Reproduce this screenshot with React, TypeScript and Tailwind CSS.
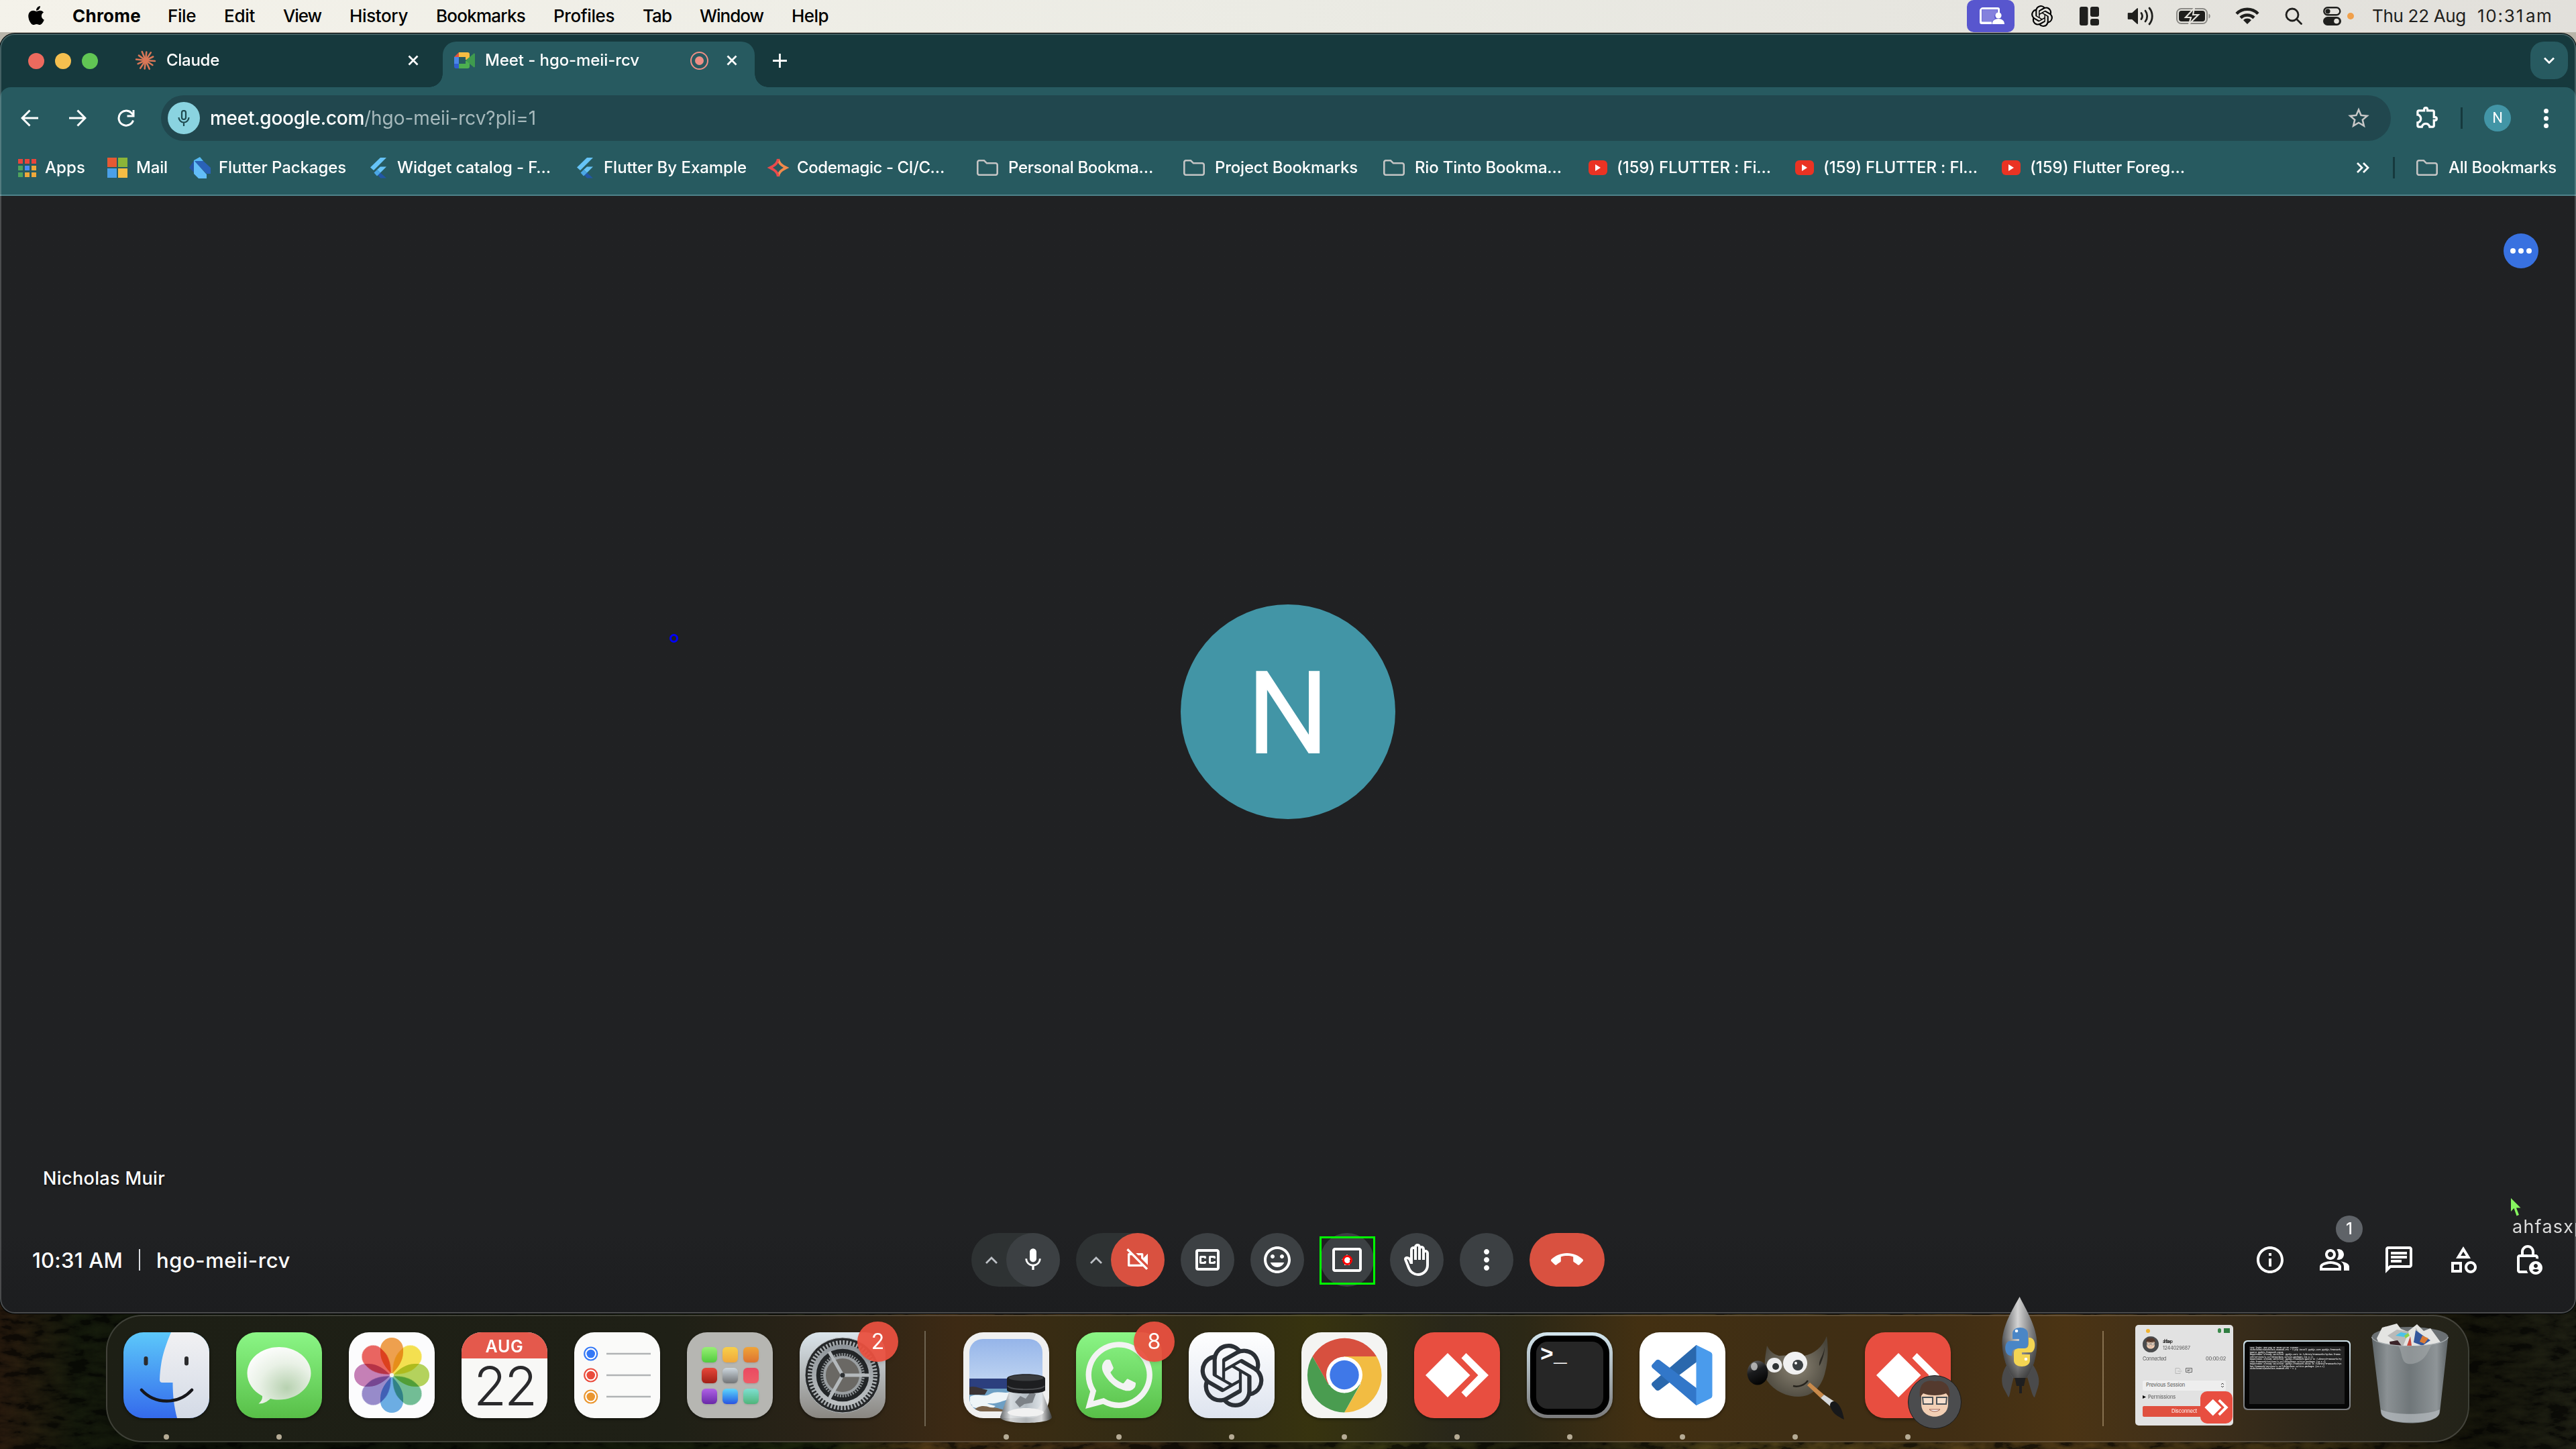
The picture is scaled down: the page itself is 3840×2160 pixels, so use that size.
import { useLayoutEffect, useRef } from "react";
import type { ReactNode } from "react";
import { SiOpenai } from "react-icons/si";
import { FaApple, FaWhatsapp } from "react-icons/fa";
import {
  MdMic,
  MdOutlineVideocamOff,
  MdOutlineClosedCaption,
  MdOutlineMood,
  MdOutlinePresentToAll,
  MdOutlineBackHand,
  MdMoreVert,
  MdCallEnd,
  MdInfoOutline,
  MdOutlinePeopleAlt,
  MdOutlineChat,
  MdOutlineCategory,
  MdOutlineLockPerson,
  MdStarBorder,
  MdOutlineExtension,
} from "react-icons/md";

/** One line of text whose tracking is adjusted so that it spans exactly `w` pixels. */
function Fit({ w, children, className = "" }: { w: number; children: string; className?: string }) {
  const ref = useRef<HTMLSpanElement>(null);
  useLayoutEffect(() => {
    const el = ref.current;
    if (!el) return;
    el.style.letterSpacing = "0px";
    const natural = el.getBoundingClientRect().width;
    el.style.letterSpacing = `${(w - natural) / children.length}px`;
  }, [w, children]);
  return (
    <span ref={ref} className={`inline-block shrink-0 whitespace-pre ${className}`}>
      {children}
    </span>
  );
}

/* ------------------------------------------------------------------ */
/* macOS menu bar                                                      */
/* ------------------------------------------------------------------ */

const menus: [string, number][] = [
  ["File", 42],
  ["Edit", 46],
  ["View", 57],
  ["History", 87],
  ["Bookmarks", 133],
  ["Profiles", 91],
  ["Tab", 43],
  ["Window", 95],
  ["Help", 55],
];

function MenuBar() {
  return (
    <div className="flex h-12 shrink-0 items-center bg-linear-to-r from-[#f4f2ea] via-[#ebebe4] to-[#e2e0db] text-[26px] leading-none text-black">
      <FaApple className="ml-[38px] h-[32px] w-[32px] -translate-y-px" />
      <Fit w={102} className="ml-[38px] font-bold">
        Chrome
      </Fit>
      <div className="ml-10 flex gap-[42px] font-[450]">
        {menus.map(([label, w]) => (
          <Fit key={label} w={w}>
            {label}
          </Fit>
        ))}
      </div>
      <div className="ml-auto flex h-full items-center text-[#1f1f1d]">
        <div className="flex h-12 w-[71px] items-center justify-center rounded-[10px] bg-[#5856ce]">
          <svg className="h-8 w-10" viewBox="0 0 40 32" fill="none">
            <path d="M8 3h22a3 3 0 0 1 3 3v6h-3V6H6v18h15v4H6a3 3 0 0 1-3-3V8a5 5 0 0 1 5-5z" fill="#fff" />
            <path d="M6.500 6.500H29V11a6 6 0 0 0-3 9l-5 4.500H6.500z" fill="#8481dd" />
            <circle cx="31" cy="15" r="4.600" fill="#fff" />
            <path d="M21.500 28c0-5 4-8 9.500-8s9 3 9 8z" fill="#fff" />
          </svg>
        </div>
        <SiOpenai className="ml-[25px] h-8 w-8 text-black" />
        <svg className="ml-10 h-7 w-[29px]" viewBox="0 0 29 28" fill="currentColor">
          <rect width="12.500" height="28" rx="3" />
          <rect x="16" width="13" height="15" rx="3" />
          <rect x="16" y="18" width="13" height="10" rx="3" />
        </svg>
        <svg className="ml-[42px] h-7 w-[40px]" viewBox="0 0 40 28" fill="none" stroke="currentColor" strokeWidth="2.800" strokeLinecap="round">
          <path d="M1 9.500h6L16 2v24l-9-7.500H1z" fill="currentColor" stroke="none" />
          <path d="M1.500 10h6L15 3v22l-7.500-7h-6z" strokeLinejoin="round" strokeWidth="1.500" />
          <path d="M21 9.500a8 8 0 0 1 0 9M27 6a13 13 0 0 1 0 16M33 2a19 19 0 0 1 0 24" />
        </svg>
        <svg className="ml-[33px] h-6 w-[52px]" viewBox="0 0 52 24" fill="none">
          <rect x="1" y="1" width="45" height="22" rx="6.500" stroke="#8a8985" strokeWidth="2" />
          <rect x="4" y="4" width="39" height="16" rx="4" fill="#1f1f1d" />
          <path d="M48.500 8.500c3 1 3 6 0 7z" fill="#8a8985" />
          <path d="M27 0 14 14h8l-3 10 14-14h-8z" fill="#1f1f1d" stroke="#e4e2dc" strokeWidth="2.200" />
        </svg>
        <svg className="ml-[36px] h-[26px] w-[36px]" viewBox="0 0 36 26" fill="none" stroke="currentColor" strokeWidth="4.600">
          <path d="M2 9.500a22.500 22.500 0 0 1 32 0M8 15.500a14.500 14.500 0 0 1 20 0" />
          <path d="m18 25-6-6a8.500 8.500 0 0 1 12 0z" fill="currentColor" stroke="none" />
        </svg>
        <svg className="ml-[38px] h-[26px] w-[27px]" viewBox="0 0 27 26" fill="none" stroke="currentColor" strokeWidth="2.800" strokeLinecap="round">
          <circle cx="11" cy="11" r="9" />
          <path d="m17.500 17.500 7 7" />
        </svg>
        <svg className="ml-[30px] h-7 w-[27px]" viewBox="0 0 27 28">
          <rect x="1.300" y="1.300" width="24" height="11" rx="5.500" fill="none" stroke="currentColor" strokeWidth="2.400" />
          <circle cx="7" cy="6.800" r="3.600" fill="currentColor" />
          <rect y="15" width="27" height="13" rx="6.500" fill="currentColor" />
          <circle cx="20" cy="21.500" r="3.800" fill="#e4e2dc" />
        </svg>
        <div className="ml-[9px] h-2.5 w-2.5 rounded-full bg-[#f0a04b]" />
        <Fit w={140} className="ml-[27px]">
          Thu 22 Aug
        </Fit>
        <Fit w={70} className="ml-[17px]">
          10:31
        </Fit>
        <Fit w={40} className="mr-[35px] ml-[2px]">
          am
        </Fit>
      </div>
    </div>
  );
}

/* ------------------------------------------------------------------ */
/* Browser chrome                                                      */
/* ------------------------------------------------------------------ */

function Cross({ className = "" }: { className?: string }) {
  return (
    <svg className={`h-4 w-4 shrink-0 ${className}`} viewBox="0 0 16 16" stroke="#fff" strokeWidth="2.800">
      <path d="m1.500 1.500 13 13m0-13-13 13" />
    </svg>
  );
}

const rays = [0, 28, 58, 88, 118, 150, 180, 208, 240, 270, 300, 332];

function TabStrip() {
  return (
    <div className="flex h-20 shrink-0 items-end bg-[#16393d]">
      <div className="flex h-[68px] items-center">
        <div className="-mt-2.5 ml-[42px] flex gap-4">
          <div className="h-6 w-6 rounded-full bg-[#ed6a5e]" />
          <div className="h-6 w-6 rounded-full bg-[#f4bf4f]" />
          <div className="h-6 w-6 rounded-full bg-[#61c554]" />
        </div>
        <svg className="-mt-3 ml-[55px] h-8 w-8" viewBox="-16 -16 32 32" stroke="#d97757" strokeWidth="2.600" strokeLinecap="round">
          {rays.map((a, i) => (
            <path key={a} d={i % 2 ? "M0 0V-14" : "M0 0V-12.500"} transform={`rotate(${a + 6})`} />
          ))}
        </svg>
        <Fit w={79} className="-mt-3 ml-[15px] text-[24px] leading-none font-medium text-white">
          Claude
        </Fit>
        <Cross className="-mt-3 ml-[281px]" />
      </div>
      <div className="relative ml-[36px] flex h-[68px] w-[465px] items-center rounded-t-[20px] bg-[#275a60]">
        <div className="absolute bottom-0 -left-5 h-5 w-5 bg-[radial-gradient(circle_at_0_0,#16393d_19.500px,#275a60_20px)]" />
        <div className="absolute -right-5 bottom-0 h-5 w-5 bg-[radial-gradient(circle_at_100%_0,#16393d_19.500px,#275a60_20px)]" />
        <svg className="-mt-3 ml-[17px] h-6 w-[31px]" viewBox="0 0 31 24">
          <path d="M0 7h7v10H0z" fill="#4a86e8" />
          <path d="M7 0v7H0z" fill="#e2533f" />
          <path d="M7 0h13a3 3 0 0 1 3 3v9l-6-1V7H7z" fill="#f5bc42" />
          <path d="M0 17h7v7H3a3 3 0 0 1-3-3z" fill="#2f5fd0" />
          <path d="M7 17h10v-4l6-1v9a3 3 0 0 1-3 3H7z" fill="#4caf50" />
          <path d="m17 12 12-10c1-1 2 0 2 1v18c0 1-1 2-2 1z" fill="#3f9a4e" />
        </svg>
        <Fit w={230} className="-mt-3 ml-[15px] text-[24px] leading-none font-medium text-white">
          Meet - hgo-meii-rcv
        </Fit>
        <div className="-mt-3 ml-[76px] flex h-[27px] w-[27px] items-center justify-center rounded-full border-[2.5px] border-[#ee8f86]">
          <div className="h-[13px] w-[13px] rounded-full bg-[#ee8f86]" />
        </div>
        <Cross className="-mt-3 ml-[27px]" />
      </div>
      <div className="flex h-[68px] items-center">
        <svg className="-mt-3 ml-[27px] h-[21px] w-[21px]" viewBox="0 0 21 21" stroke="#fff" strokeWidth="2.800">
          <path d="M10.500 0v21M0 10.500h21" />
        </svg>
      </div>
      <div className="mr-3 mb-3 ml-auto flex h-14 w-14 items-center justify-center rounded-[20px] bg-[#275a60]">
        <svg className="h-[10px] w-4" viewBox="0 0 16 10" fill="none" stroke="#fff" strokeWidth="2.800">
          <path d="m1 1.500 7 7 7-7" />
        </svg>
      </div>
    </div>
  );
}

function Toolbar() {
  return (
    <div className="flex h-[80px] shrink-0 items-center pt-3 text-white">
      <svg className="ml-[31px] h-[26px] w-[26px]" viewBox="0 0 26 26" fill="none" stroke="#fff" strokeWidth="3">
        <path d="M26 13H2.500M13.500 1.500 2 13l11.500 11.500" />
      </svg>
      <svg className="ml-[46px] h-[26px] w-[26px]" viewBox="0 0 26 26" fill="none" stroke="#fff" strokeWidth="3">
        <path d="M0 13h23.500M12.500 1.500 24 13 12.500 24.500" />
      </svg>
      <svg className="ml-[46px] h-[26px] w-[26px]" viewBox="0 0 26 26" fill="none" stroke="#fff" strokeWidth="3">
        <path d="M23.500 16.500A11 11 0 1 1 20.500 5l3.500 3.500" />
        <path d="M24 1v9h-9.500" />
      </svg>
      <div className="ml-[39px] flex h-[68px] w-[3324px] items-center rounded-full bg-[#21474e]">
        <div className="ml-2.5 flex h-12 w-12 items-center justify-center rounded-full bg-[#8ad3e0]">
          <svg className="h-6 w-[18px]" viewBox="0 0 18 24" fill="none" stroke="#1f4a50" strokeWidth="2.200">
            <rect x="6" y="1" width="6" height="13" rx="3" />
            <path d="M1.500 11a7.500 7.500 0 0 0 15 0M9 18.500V24" />
          </svg>
        </div>
        <Fit w={230} className="ml-[15px] text-[28px] leading-none font-medium">
          meet.google.com
        </Fit>
        <Fit w={256} className="text-[28px] leading-none text-[#a6b9bc]">
          /hgo-meii-rcv?pli=1
        </Fit>
        <MdStarBorder className="mr-[29px] ml-auto h-[38px] w-[38px] text-[#c7c7c7]" />
      </div>
      <MdOutlineExtension className="ml-[35px] h-[39px] w-[39px] -translate-y-[2px]" />
      <div className="ml-[30px] h-8 w-[3px] bg-[#16393d]" />
      <div className="ml-[32px] flex h-10 w-10 items-center justify-center rounded-full bg-[#4295a6] font-[Roboto] text-[22px] leading-none">
        N
      </div>
      <div className="ml-[49px] flex flex-col gap-1">
        <div className="h-[7px] w-[7px] rounded-full bg-white" />
        <div className="h-[7px] w-[7px] rounded-full bg-white" />
        <div className="h-[7px] w-[7px] rounded-full bg-white" />
      </div>
    </div>
  );
}

const appDots = ["#e8453c", "#e8453c", "#e8453c", "#4fa35c", "#4a8af4", "#efa83a", "#4fa35c", "#efa83a", "#efa83a"];

function AppsIcon() {
  return (
    <div className="grid grid-cols-3 gap-[3px]">
      {appDots.map((c, i) => (
        <div key={i} className="h-[7px] w-[7px]" style={{ background: c }} />
      ))}
    </div>
  );
}

function WindowsIcon() {
  return (
    <div className="grid grid-cols-2 gap-[2px]">
      <div className="h-3.5 w-3.5 bg-[#e55934]" />
      <div className="h-3.5 w-3.5 bg-[#8bb538]" />
      <div className="h-3.5 w-3.5 bg-[#4aa0e8]" />
      <div className="h-3.5 w-3.5 bg-[#f4bc44]" />
    </div>
  );
}

function DartIcon() {
  return (
    <svg className="h-8 w-8" viewBox="0 0 32 32">
      <path d="M0 16 8 4v20z" fill="#2453a0" />
      <path d="m7 5 9-5 5 6H7z" fill="#56b9f2" />
      <path d="M7 6h14l11 10v9h-6z" fill="#2a62b8" />
      <path d="m7 5 19 21v6H14l-7-7z" fill="#62bdf8" />
    </svg>
  );
}

function FlutterIcon() {
  return (
    <svg className="h-8 w-8" viewBox="0 0 32 32">
      <path d="M19 1h9L9 20l-5-4.500z" fill="#66c3f7" />
      <path d="M19 14.500h9L19 23.500l-5-4.500z" fill="#66c3f7" />
      <path d="m19 23.500 9 8h-9L14 26z" fill="#2257a5" />
      <path d="m9.500 23.500 4.500-4.500 5 4.500-5 5z" fill="#4ba7e6" />
    </svg>
  );
}

function CodemagicIcon() {
  return (
    <svg className="h-8 w-8" viewBox="0 0 32 32" fill="none" strokeWidth="4">
      <path d="M16 3c1 6 4 9 12 13-8 4-11 7-12 13" stroke="#f08a4b" />
      <path d="M16 3c-1 6-4 9-12 13 8 4 11 7 12 13" stroke="#ea4a4c" />
    </svg>
  );
}

function FolderIcon() {
  return (
    <svg className="h-6 w-8" viewBox="0 0 32 24" fill="none" stroke="#c4c4c4" strokeWidth="2.600">
      <path d="M1.300 20V4a2.500 2.500 0 0 1 2.500-2.700H11l4 4h13a2.500 2.500 0 0 1 2.700 2.500V20a2.500 2.500 0 0 1-2.700 2.700H4A2.500 2.500 0 0 1 1.300 20z" />
    </svg>
  );
}

function YoutubeIcon() {
  return (
    <div className="flex h-[22px] w-7 items-center justify-center rounded-[6px] bg-[#ea3323]">
      <svg className="h-2.5 w-2" viewBox="0 0 8 10" fill="#fff">
        <path d="m0 0 8 5-8 5z" />
      </svg>
    </div>
  );
}

type Mark = { icon: ReactNode; label: string; w: number; slot: string; gap: string };

const marks: Mark[] = [
  { icon: <AppsIcon />, label: "Apps", w: 60, slot: "w-[135px]", gap: "ml-[11px]" },
  { icon: <WindowsIcon />, label: "Mail", w: 47, slot: "w-[123px]", gap: "ml-[12px]" },
  { icon: <DartIcon />, label: "Flutter Packages", w: 190, slot: "w-[266px]", gap: "ml-[12px]" },
  { icon: <FlutterIcon />, label: "Widget catalog - F…", w: 229, slot: "w-[308px]", gap: "ml-[12px]" },
  { icon: <FlutterIcon />, label: "Flutter By Example", w: 213, slot: "w-[288px]", gap: "ml-[12px]" },
  { icon: <CodemagicIcon />, label: "Codemagic - CI/C…", w: 220, slot: "w-[312px]", gap: "ml-[12px]" },
  { icon: <FolderIcon />, label: "Personal Bookma…", w: 216, slot: "w-[308px]", gap: "ml-[15px]" },
  { icon: <FolderIcon />, label: "Project Bookmarks", w: 213, slot: "w-[298px]", gap: "ml-[15px]" },
  { icon: <FolderIcon />, label: "Rio Tinto Bookma…", w: 219, slot: "w-[304px]", gap: "ml-[15px]" },
  { icon: <YoutubeIcon />, label: "(159) FLUTTER : Fi…", w: 230, slot: "w-[308px]", gap: "ml-[12px]" },
  { icon: <YoutubeIcon />, label: "(159) FLUTTER : Fl…", w: 230, slot: "w-[308px]", gap: "ml-[12px]" },
  { icon: <YoutubeIcon />, label: "(159) Flutter Foreg…", w: 231, slot: "w-[308px]", gap: "ml-[12px]" },
];

function BookmarksBar() {
  return (
    <div className="flex h-20 shrink-0 items-center pl-6 text-[24px] leading-none font-medium text-white">
      {marks.map((m, i) => (
        <div key={i} className={`flex shrink-0 items-center ${m.slot}`}>
          <div className="flex w-8 justify-center">{m.icon}</div>
          <Fit w={m.w} className={m.gap}>
            {m.label}
          </Fit>
        </div>
      ))}
      <svg className="ml-[222px] h-4 w-5" viewBox="0 0 20 16" fill="none" stroke="#fff" strokeWidth="2.800">
        <path d="m2 1 7 7-7 7M11 1l7 7-7 7" />
      </svg>
      <div className="ml-[35px] h-8 w-[3px] bg-[#16393d]" />
      <div className="ml-[32px]">
        <FolderIcon />
      </div>
      <Fit w={161} className="ml-4">
        All Bookmarks
      </Fit>
    </div>
  );
}

/* ------------------------------------------------------------------ */
/* Meet page                                                           */
/* ------------------------------------------------------------------ */

function Round({ children }: { children: ReactNode }) {
  return <div className="relative flex h-20 w-20 items-center justify-center rounded-full bg-[#3c4043] text-white">{children}</div>;
}

function Split({ red, children }: { red?: boolean; children: ReactNode }) {
  return (
    <div className="flex h-20 w-[132px] items-center rounded-full bg-[#2e3233]">
      <div className="flex w-[52px] justify-center pl-2">
        <svg className="h-[11px] w-[18px]" viewBox="0 0 18 11" fill="none" stroke="#bdc1c6" strokeWidth="2.800">
          <path d="m1 10 8-8 8 8" />
        </svg>
      </div>
      <div className={`flex h-20 w-20 items-center justify-center rounded-full text-white ${red ? "bg-[#d95140]" : "bg-[#3c4043]"}`}>{children}</div>
    </div>
  );
}

function Meet() {
  return (
    <div className="relative flex flex-1 flex-col bg-linear-to-b from-[#202123] from-93% to-[#1c1d1f]">
      <div className="mt-14 mr-14 flex h-[52px] w-[52px] shrink-0 items-center justify-center gap-[4px] self-end rounded-full bg-[#3871e0]">
        <div className="h-2 w-2 rounded-full bg-white" />
        <div className="h-2 w-2 rounded-full bg-white" />
        <div className="h-2 w-2 rounded-full bg-white" />
      </div>
      <div className="mt-[501px] flex h-80 w-80 shrink-0 items-center justify-center self-center rounded-full bg-[#4295a6] font-[Roboto] text-[173px] leading-none text-white">
        <span className="translate-y-[3px]">N</span>
      </div>
      <div className="mt-[521px] ml-[64px] shrink-0 text-[27px] leading-[30px] font-medium text-white [text-shadow:0_2px_3px_rgba(0,0,0,0.5)]">
        <Fit w={182}>Nicholas Muir</Fit>
      </div>
      <div className="mt-[66px] grid h-20 shrink-0 grid-cols-[1448px_1fr_1448px] items-center">
        <div className="flex items-center pl-[48px] text-[31px] leading-none font-medium text-white">
          <Fit w={135}>10:31 AM</Fit>
          <div className="ml-[24px] h-8 w-0.5 bg-[#dadce0]" />
          <Fit w={200} className="ml-[24px]">
            hgo-meii-rcv
          </Fit>
        </div>
        <div className="flex items-center gap-6">
          <Split>
            <MdMic className="h-10 w-10" />
          </Split>
          <Split red>
            <MdOutlineVideocamOff className="h-10 w-10" />
          </Split>
          <Round>
            <MdOutlineClosedCaption className="h-12 w-12" />
          </Round>
          <Round>
            <MdOutlineMood className="h-12 w-12" />
          </Round>
          <Round>
            <MdOutlinePresentToAll className="h-12 w-12" />
            <div className="absolute top-[5px] -left-px h-[72px] w-[83px] border-[3px] border-[#00ff00]" />
            <div className="absolute top-[33px] left-[33px] h-[15px] w-[15px] rounded-full border-[3px] border-[#ff0000]" />
          </Round>
          <Round>
            <MdOutlineBackHand className="h-12 w-12" />
          </Round>
          <Round>
            <MdMoreVert className="h-12 w-12" />
          </Round>
          <div className="flex h-20 w-28 items-center justify-center rounded-[40px] bg-[#d95140] text-white">
            <MdCallEnd className="h-12 w-12" />
          </div>
        </div>
        <div className="flex items-center justify-end gap-12 pr-12 text-white">
          <MdInfoOutline className="h-12 w-12" />
          <div className="relative">
            <MdOutlinePeopleAlt className="h-12 w-12" />
            <div className="absolute -top-[42px] left-[26px] flex h-10 w-10 items-center justify-center rounded-full bg-[#5f6368] text-[24px] leading-none font-medium">
              1
            </div>
          </div>
          <MdOutlineChat className="h-12 w-12" />
          <MdOutlineCategory className="h-12 w-12" />
          <MdOutlineLockPerson className="h-12 w-12" />
        </div>
      </div>
      <div className="absolute top-[653px] left-[998px] h-[13px] w-[13px] rounded-full border-[3px] border-[#0000ff]" />
      <div className="absolute top-[1494px] left-[3743px]">
        <svg className="h-[27px] w-[15px]" viewBox="0 0 15 27" fill="#86f55f">
          <path d="M0 0v20l4.500-5 4 11.500 3.500-1.500-4-10.500h6.500z" />
        </svg>
        <Fit w={110} className="mt-px ml-[2px] block text-[27px] leading-[30px] text-[#dcdcdc]">
          ahfasxp
        </Fit>
      </div>
    </div>
  );
}

function BrowserWindow() {
  return (
    <div className="relative mt-0.5 flex h-[1908px] shrink-0 flex-col overflow-hidden rounded-[22px] bg-[#16393d] shadow-[0_0_0_1px_#000]">
      <TabStrip />
      <div className="flex shrink-0 flex-col rounded-t-[16px] border-b-2 border-[#4f828a] bg-[#275a60]">
        <Toolbar />
        <BookmarksBar />
      </div>
      <Meet />
      <div className="pointer-events-none absolute inset-0 rounded-[22px] border-2 border-white/20" />
    </div>
  );
}

/* ------------------------------------------------------------------ */
/* Dock                                                                */
/* ------------------------------------------------------------------ */

function Tile({ children, running, badge }: { children: ReactNode; running?: boolean; badge?: string }) {
  return (
    <div className="relative h-32 w-32 shrink-0">
      {children}
      {badge && (
        <div className="absolute -top-4 left-[86px] flex h-[60px] w-[61px] items-center justify-center rounded-full bg-[#e9503f]/95 text-[32px] leading-none text-white shadow-md">
          {badge}
        </div>
      )}
      {running && <div className="absolute top-[152px] left-[60px] h-2 w-2 rounded-full bg-[#b5ab95]" />}
    </div>
  );
}

const box = "block h-32 w-32 overflow-hidden rounded-[30px] shadow-[0_2px_4px_rgba(0,0,0,0.4)]";

function Finder() {
  return (
    <svg className={box} viewBox="0 0 128 128" fill="none">
      <defs>
        <linearGradient id="finder-blue" x2="0" y2="1">
          <stop stopColor="#5cc8fa" />
          <stop offset="1" stopColor="#346aec" />
        </linearGradient>
        <linearGradient id="finder-white" x2="0" y2="1">
          <stop stopColor="#f1f1f3" />
          <stop offset="1" stopColor="#d3dae6" />
        </linearGradient>
      </defs>
      <path d="M0 0h128v128H0z" fill="url(#finder-blue)" />
      <path d="M71 0C60 26 55 44 54 71q0 4 4 4h15.500c0 20 2 36 6.500 53h48V0z" fill="url(#finder-white)" />
      <path d="M33.500 39v7.500M94 39v7.500" stroke="#2b2b2d" strokeWidth="6" strokeLinecap="round" />
      <path d="M27 86c20 22 55 22 75 0" stroke="#16161a" strokeWidth="4.500" strokeLinecap="round" />
    </svg>
  );
}

function Messages() {
  return (
    <svg className={box} viewBox="0 0 128 128">
      <defs>
        <linearGradient id="msg-bg" x2="0" y2="1">
          <stop stopColor="#8bf686" />
          <stop offset="1" stopColor="#58bf48" />
        </linearGradient>
        <radialGradient id="msg-bubble" cx=".62" cy=".72" r=".8">
          <stop stopColor="#b7d1b0" />
          <stop offset=".55" stopColor="#e9f1e6" />
          <stop offset="1" stopColor="#fff" />
        </radialGradient>
      </defs>
      <path d="M0 0h128v128H0z" fill="url(#msg-bg)" />
      <path d="M64 22c26 0 47.500 17.500 47.500 39S90 100.500 64 100.500c-5 0-9-.5-13-1.500-4 4-10 7.500-17.500 7.500 4-3.500 6-7.500 5.500-11.500C25.500 88 16.500 75.500 16.500 61 16.500 39.500 38 22 64 22z" fill="url(#msg-bubble)" />
    </svg>
  );
}

const petals = ["#f0983a", "#f6e03c", "#aed14c", "#63b98a", "#5ca6e2", "#8d80c6", "#c274b0", "#ea5450"];

function Photos() {
  return (
    <svg className={`${box} bg-[#fcfcfd]`} viewBox="0 0 128 128">
      {petals.map((c, i) => (
        <path
          key={c}
          d="M64 62C55 54 47 42 47 30v-5a17 17 0 0 1 34 0v5c0 12-8 24-17 32z"
          fill={c}
          opacity=".9"
          transform={`rotate(${i * 45} 64 64)`}
          className="mix-blend-multiply"
        />
      ))}
      <circle cx="64" cy="64" r="3" fill="#f3f3ea" />
    </svg>
  );
}

function Calendar() {
  return (
    <div className={`${box} flex flex-col items-center bg-[#f8f8f6] leading-none`}>
      <div className="flex h-[39px] w-full shrink-0 items-center justify-center bg-[#e4594c] pt-1 text-[25px] font-semibold text-white">
        <Fit w={57}>AUG</Fit>
      </div>
      <Fit w={92} className="text-[80px] leading-[82px] font-light text-[#2a2a2c]">
        22
      </Fit>
    </div>
  );
}

function Reminders() {
  return (
    <svg className={`${box} bg-[#fafaf9]`} viewBox="0 0 128 128">
      {["#3478f6", "#ea4c3d", "#ea962f"].map((c, i) => (
        <g key={c} transform={`translate(0 ${32 + i * 32})`}>
          <circle cx="24.700" r="9.500" fill="#fff" stroke={c} strokeWidth="2.200" />
          <circle cx="24.700" r="6.300" fill={c} />
          <path d="M48 0h66" stroke="#b0b3b5" strokeWidth="2.600" />
        </g>
      ))}
    </svg>
  );
}

const pads = [
  "bg-linear-to-b from-[#97f075] to-[#4fcb3c]",
  "bg-linear-to-b from-[#f7cf4a] to-[#efa83b]",
  "bg-linear-to-b from-[#efa438] to-[#dd7330]",
  "bg-linear-to-b from-[#e8473a] to-[#a21f15]",
  "bg-linear-to-b from-[#ced8e0] to-[#727476]",
  "bg-linear-to-b from-[#ea4962] to-[#ee5c66]",
  "bg-linear-to-b from-[#b061e6] to-[#6a28a8]",
  "bg-linear-to-b from-[#62d6fa] to-[#2c52e0]",
  "bg-linear-to-b from-[#7fe0d2] to-[#4fb47a]",
];

function Launchpad() {
  return (
    <div className={`${box} grid grid-cols-[23px_23px_23px] content-center justify-center gap-2 bg-[#b6b6b2]`}>
      {pads.map((p) => (
        <div key={p} className={`h-[23px] w-[23px] rounded-[6px] shadow-sm ${p}`} />
      ))}
    </div>
  );
}

function SystemSettings() {
  return (
    <svg className={box} viewBox="0 0 128 128" fill="none">
      <defs>
        <linearGradient id="set-bg" x2="0" y2="1">
          <stop stopColor="#dbe5ec" />
          <stop offset="1" stopColor="#8a8782" />
        </linearGradient>
        <linearGradient id="set-ring" x2="0" y2="1">
          <stop stopColor="#8f959a" />
          <stop offset="1" stopColor="#bcc0c2" />
        </linearGradient>
      </defs>
      <path d="M0 0h128v128H0z" fill="url(#set-bg)" />
      <circle cx="64" cy="64" r="56" fill="#26282a" stroke="#b8bdc0" strokeWidth="1" />
      <circle cx="64" cy="64" r="48.500" stroke="#a9aeb1" strokeWidth="7" strokeDasharray="2.600 2.480" />
      <circle cx="64" cy="64" r="42.500" fill="#222527" stroke="url(#set-ring)" strokeWidth="6.500" />
      <circle cx="64" cy="64" r="31" stroke="#8e9396" strokeWidth="4" strokeDasharray="2 1.900" />
      <circle cx="64" cy="64" r="27" fill="#6a6864" stroke="#9a9fa2" strokeWidth="4" />
      <path d="M64 64h40M64 64 44 29M64 64 44 99" stroke="#b4b9bc" strokeWidth="5" />
      <circle cx="64" cy="64" r="3.500" fill="#2c2f31" />
    </svg>
  );
}

function Preview() {
  return (
    <svg className="block h-32 w-32 overflow-visible drop-shadow-md" viewBox="0 0 128 128">
      <defs>
        <linearGradient id="pv-sky" x2="0" y2="1">
          <stop stopColor="#8fb0e8" />
          <stop offset="1" stopColor="#bcd2f1" />
        </linearGradient>
        <linearGradient id="pv-jar">
          <stop stopColor="#5b5e61" />
          <stop offset=".2" stopColor="#dde0e2" />
          <stop offset=".5" stopColor="#b9bec2" />
          <stop offset=".8" stopColor="#e6e8ea" />
          <stop offset="1" stopColor="#3c3e40" />
        </linearGradient>
        <clipPath id="pv-clip">
          <rect x="9" y="10" width="109" height="108" rx="20" />
        </clipPath>
      </defs>
      <rect width="128" height="128" rx="30" fill="#f0f0f0" />
      <g clipPath="url(#pv-clip)">
        <path d="M0 0h128v70H0z" fill="url(#pv-sky)" />
        <path d="M0 69h128v16H0z" fill="#2c3f7e" />
        <path d="M0 84h128v40H0z" fill="#6d9fc4" />
        <path d="M8 82c10-3 16 2 28 4l-4 7H8z" fill="#3b3334" />
        <path d="M10 96c12-6 20 2 30-4s20 0 30-3v10c-14 4-20 8-30 7s-20 6-30 1zM8 110l20-6 20 6-10 8z" fill="#eef5f8" />
        <path d="M14 118c8-10 18-9 26-6 10 0 20 3 24 6z" fill="#7a6248" />
      </g>
      <path d="M70 84h46l16 42c1 5-14 9-38 9s-40-4-39-9z" fill="url(#pv-jar)" opacity=".93" />
      <path d="M66 119c10-8 46-8 54 0 0 9-54 9-54 0z" fill="#f1f1f1" />
      <path d="M77 104l8-9 8 4 7-10 8 3-5 13-12 2-7 5z" fill="#7d8287" />
      <path d="M65 69c0-9 57-9 57 0v17c0 7-57 7-57 0z" fill="#1d1e20" />
      <ellipse cx="93.500" cy="68" rx="26" ry="4.500" fill="#3a3c3e" />
      <path d="M66 80c6 7 50 7 55 0" stroke="#4a4c4f" fill="none" strokeWidth="2" />
    </svg>
  );
}

function Chrome() {
  return (
    <svg className={`${box} bg-[#f4f4f2]`} viewBox="0 0 128 128">
      <path d="M64 119.500A55.500 55.500 0 0 0 112 36H64l24.500 41z" fill="#f2bc42" />
      <path d="M16.500 36A55.500 55.500 0 0 1 112 36H64L40 78z" fill="#d7503f" />
      <path d="M16.500 36 40 77.500 64 90.500 88 77 64 119.500A55.500 55.500 0 0 1 16.500 36z" fill="#4a9c50" />
      <circle cx="64" cy="63.500" r="27" fill="#fff" />
      <circle cx="64" cy="63.500" r="21.700" fill="#3f78e8" />
    </svg>
  );
}

function AnyDesk({ className }: { className: string }) {
  return (
    <svg className={`${className} bg-[#e84e40]`} viewBox="0 0 128 128" fill="#fff">
      <path d="m17 64 33-33 33.500 33L50 97zM77.500 31 111 64 77.500 97l-7-7.500 25-25.500-25-25.500z" />
    </svg>
  );
}

function Terminal() {
  return (
    <div className={`${box} bg-linear-to-b from-[#d3e6ee] to-[#7a7a7b] p-[5px]`}>
      <div className="h-full w-full rounded-[26px] bg-black p-[9px]">
        <div className="h-full w-full rounded-[17px] bg-[#262626] pt-[3px] pl-[6px] font-['Liberation_Mono'] text-[33px] leading-[36px] font-bold text-white">
          <Fit w={40}>&gt;_</Fit>
        </div>
      </div>
    </div>
  );
}

function VSCode() {
  return (
    <svg className={`${box} bg-white`} viewBox="0 0 128 128">
      <path d="m84.500 19 5 3-4 22L30 86q-3 2-5.500 0L19 80q-2-2.500 0-5z" fill="#2a68ad" />
      <path d="M19 53q-2-3 0-5l6-6.500q2.500-1.500 5 0L86 84l4 22-5.500 3z" fill="#3277c9" />
      <path d="M84.500 19 106 29.500q2.500 1.500 2.500 4v61q0 3-2.500 4L84.500 109q-1 0 0-1z" fill="#4a9bec" />
    </svg>
  );
}

function Gimp() {
  return (
    <svg className="block h-32 w-32 overflow-visible" viewBox="0 0 128 128">
      <defs>
        <radialGradient id="gimp-fur" cx=".5" cy=".5" r=".6">
          <stop stopColor="#8b8474" />
          <stop offset="1" stopColor="#48443a" />
        </radialGradient>
        <linearGradient id="gimp-nose" x2=".4" y2="1">
          <stop stopColor="#777" />
          <stop offset=".5" stopColor="#1b1c1e" />
          <stop offset="1" stopColor="#050505" />
        </linearGradient>
      </defs>
      <path d="M22 20c4 8 10 13 18 15 14-2 26 2 38 0C92 32 105 22 111 6c2 12 3 34-2 52-5 24-20 38-40 38-17 0-36-8-47-24-6-16-3-34 0-52z" fill="url(#gimp-fur)" />
      <path d="M108 22c-2 14-9 18-8 28 2-2 8-16 8-28z" fill="#2b2822" />
      <ellipse cx="33" cy="49" rx="11.500" ry="11" fill="#ececec" />
      <ellipse cx="64" cy="46" rx="18" ry="17" fill="#f1f1f1" />
      <circle cx="35" cy="51" r="5" fill="#2e3234" />
      <circle cx="68" cy="49" r="8" fill="#3a3f42" />
      <circle cx="65" cy="46" r="2" fill="#fff" />
      <ellipse cx="8" cy="60.500" rx="15.500" ry="18" fill="url(#gimp-nose)" />
      <ellipse cx="3" cy="51" rx="5" ry="6" fill="#c9c9c9" opacity=".8" />
      <path d="M61 80c8 2 17-1 22-8" fill="none" stroke="#26231d" strokeWidth="2.500" />
      <path d="m82 79 4-4 21 18-5 5z" fill="#c98a4b" />
      <path d="m102 98 5-5 15 10-6 7z" fill="#d7d9db" />
      <path d="M116 109c0-6 6-8 10-4 6 5 9 14 11 25-9-4-19-10-21-21z" fill="#17181a" />
    </svg>
  );
}

function Memoji() {
  return (
    <svg className="h-full w-full" viewBox="0 0 80 80">
      <circle cx="40" cy="40" r="39.500" fill="#4b4c4e" stroke="#1c1c1c" />
      <path d="M20 30c0-26 40-26 40 0v13c0 25-40 25-40 0z" fill="#f2cfb4" />
      <path d="M18 33C15 4 36 8 40 9c8-2 25 1 22 24-3-3-4-5-5-6-8 4-26 4-34 0-2 2-3 4-5 6z" fill="#543a2e" />
      <path d="M22 33h15v10H23zM43 33h15l-1 10H43z" fill="#ffffff55" stroke="#4a5156" strokeWidth="2" />
      <path d="M32 51c4 4 12 4 16 0z" fill="#fff" stroke="#9c5a4a" />
    </svg>
  );
}

function Rocket() {
  return (
    <svg className="block h-32 w-32 overflow-visible" viewBox="0 0 128 128">
      <defs>
        <linearGradient id="rk">
          <stop stopColor="#55575a" />
          <stop offset=".45" stopColor="#d4d4d4" />
          <stop offset="1" stopColor="#5a5b5d" />
        </linearGradient>
        <linearGradient id="rk-shade" x2="0" y2="1">
          <stop offset=".5" stopColor="#000" stopOpacity="0" />
          <stop offset="1" stopColor="#000" stopOpacity=".6" />
        </linearGradient>
      </defs>
      <path d="M44 48c-7 10-10 22-6 34l8 15c2 0 3-14 8-30zM82 48c7 10 12 22 8 34l-5 15c-3 0-6-14-11-30z" fill="#4a4a4b" />
      <path d="M55 66h17l-3 14h-3v11h-4V80h-4z" fill="#1f1f20" />
      <path d="M62.600-53C52-34 36-8 36.500 17 37 36 44 56 53 68h20c9-12 15.500-32 15.500-51C88.500-8 72-34 62.600-53z" fill="url(#rk)" />
      <path d="M62.600-53C52-34 36-8 36.500 17 37 36 44 56 53 68h20c9-12 15.500-32 15.500-51C88.500-8 72-34 62.600-53z" fill="url(#rk-shade)" />
      <path d="M52 2c0-12 23-12 23 0v14c0 7-3 9-8 9h-9c-6 0-7 4-7 10-13 1-12-22-3-22h14v-3H52z" fill="#4a86c6" />
      <path d="M76 8c12-2 12 21 3 22H66v3h12v9c0 12-24 12-24 0V32c0-6 3-8 8-8h8c5 0 6-4 6-9z" fill="#f4d553" />
      <circle cx="58" cy="-2" r="2.300" fill="#fff" />
      <circle cx="72" cy="40" r="2.300" fill="#fff" />
    </svg>
  );
}

function SessionThumb() {
  return (
    <div className="relative mb-[10px] ml-[47px] flex h-[150px] w-[146px] shrink-0 flex-col rounded-[5px] bg-[#e2e2e2] px-[11px] text-[9px] leading-none text-[#555]">
      <div className="mt-[5px] flex h-[7px] items-center">
        <div className="ml-[5px] h-[6px] w-[6px] rounded-full bg-[#f2b32f]" />
        <div className="ml-auto h-[7px] w-[5px] rounded-sm bg-[#3a8a4a]" />
        <div className="-mr-1.5 ml-1 h-[7px] w-[9px] bg-[#2f7d41]" />
      </div>
      <div className="mt-[5px] flex items-center gap-[6px]">
        <div className="h-6 w-6 shrink-0">
          <Memoji />
        </div>
        <div className="flex flex-col gap-[3px]">
          <Fit w={27} className="text-[7px] font-bold text-[#333]">
            ahfasxp
          </Fit>
          <Fit w={41} className="text-[7px]">
            1244029687
          </Fit>
        </div>
      </div>
      <div className="mt-[6px] flex justify-between text-[7.5px]">
        <Fit w={35}>Connected</Fit>
        <Fit w={30}>00:00:02</Fit>
      </div>
      <div className="mt-[9px] ml-12 flex gap-[5px]">
        <svg className="h-[9px] w-[11px]" viewBox="0 0 11 9" fill="none" stroke="#b8b8b8">
          <path d="M8 3V2L6 .5H1v8h7V7M4 5h6.500" />
        </svg>
        <svg className="h-[9px] w-[10px]" viewBox="0 0 10 9" fill="none" stroke="#666">
          <path d="M.5.500h9v6H6L5 8 4 6.500H.500zM2.500 3h5M2.500 4.500h3" />
        </svg>
      </div>
      <div className="mt-[10px] flex h-[15px] shrink-0 items-center rounded-[2px] bg-[#eeeeee] pl-[5px]">
        <Fit w={58} className="text-[7.5px]">
          Previous Session
        </Fit>
        <svg className="mr-[3px] ml-auto h-2 w-1" viewBox="0 0 4 8" fill="none" stroke="#444">
          <path d="m0 3 2-2 2 2M0 5l2 2 2-2" />
        </svg>
      </div>
      <div className="mt-[6px] flex items-center gap-[3px]">
        <svg className="h-[5px] w-[5px]" viewBox="0 0 5 5">
          <path d="m0 0 5 2.500L0 5z" />
        </svg>
        <Fit w={41} className="text-[7.5px]">
          Permissions
        </Fit>
      </div>
      <div className="mt-[10px] flex h-4 shrink-0 items-center rounded-[2px] bg-[#e0503f] pl-[43px]">
        <Fit w={38} className="text-[7.5px] text-white">
          Disconnect
        </Fit>
      </div>
      <div className="absolute top-[99px] left-[97px]">
        <AnyDesk className="block h-12 w-12 rounded-[10px]" />
      </div>
    </div>
  );
}

const shell = [
  "Last login: Mon Aug 19 15:51:43 on ttys003",
  "nicholasmuir@Nicholass-MacBook-Pro ~ % pip install pyobjc-core pyobjc-framework-",
  "Quartz pyobjc-framework-Cocoa",
  "Requirement already satisfied: pyobjc-core in /Library/Frameworks/Python.framew",
  "ork/Versions/3.12/lib/python3.12/site-packages (10.3.1)",
  "Requirement already satisfied: pyobjc-framework-Quartz in /Library/Frameworks/Py",
  "thon.framework/Versions/3.12/lib/python3.12/site-packages (10.3.1)",
  "Requirement already satisfied: pyobjc-framework-Cocoa in /Library/Frameworks/Pyt",
  "hon.framework/Versions/3.12/lib/python3.12/site-packages (10.3.1)",
  "nicholasmuir@Nicholass-MacBook-Pro ~ % ▯",
];

function ShellThumb() {
  return (
    <div className="mb-[10px] ml-[15px] h-[104px] w-40 shrink-0 rounded-[6px] bg-linear-to-b from-[#cfe3ec] to-[#77787a] p-[2px]">
      <div className="h-full w-full rounded-[5px] bg-[#060606] p-[7px]">
        <div className="h-full w-full overflow-hidden bg-[#242424] p-px font-['Liberation_Mono'] text-[2.85px] leading-[3.45px] font-bold whitespace-pre text-[#e8e8e8]">
          {shell.map((line, i) => (
            <div key={i}>{line}</div>
          ))}
        </div>
      </div>
    </div>
  );
}

function Trash() {
  return (
    <svg className="mb-[14px] ml-[31px] h-[150px] w-[116px] shrink-0" viewBox="0 0 116 150">
      <defs>
        <linearGradient id="bin">
          <stop stopColor="#5f6669" />
          <stop offset=".2" stopColor="#8b9194" />
          <stop offset=".5" stopColor="#6f7679" />
          <stop offset=".85" stopColor="#8e9497" />
          <stop offset="1" stopColor="#5c6265" />
        </linearGradient>
      </defs>
      <ellipse cx="57.500" cy="20" rx="57" ry="15" fill="#6b7073" />
      <path d="M8 22 16 6l22-6 6 8 10 4 14-11 10 10 10-4 16 22-12 11-76 1z" fill="#e4e4e2" />
      <path d="m24 18 14-9 18 3-9 22zM66 6l9 14-9 10z" fill="#b9b9b8" />
      <path d="m36 18 8-5 10 2-5 5z" fill="#4bc2e8" />
      <path d="m49 18 6-4 2 4-6 4z" fill="#8fd14a" />
      <path d="m66 10 14 10 8 5-12 8-13-5z" fill="#33569c" />
      <path d="m76 18 9 4-6 8-7-3z" fill="#d97a35" />
      <path d="m27 27 12-2 6 8H28z" fill="#3a2328" />
      <path d="m53 33 5-14 2 14z" fill="#c8493c" />
      <path d="M.500 20c6 18 108 18 114 0L102 132c-2 22-86 22-88 0z" fill="url(#bin)" />
      <path d="M40 33c8 12 2 30 22 27 20-4 22-20 28-28-16 3-34 3-50 1z" fill="#a4a8aa" opacity=".6" />
      <path d="M14 128c16 9 72 9 88 0l-1 6c-4 18-82 18-86 0z" fill="#b5bbbf" opacity=".7" />
      <path d="M.500 20c6 18 108 18 114 0" fill="none" stroke="#a7adb0" strokeWidth="1.200" />
    </svg>
  );
}

function Dock() {
  return (
    <div className="relative mt-0.5 ml-[158px] flex h-[190px] w-[3523px] shrink-0 items-center rounded-[54px] border-2 border-white/15 bg-[linear-gradient(90deg,#1d1f15_0%,#1f2016_24%,#2a2317_30%,#3d2a14_36%,#382c13_40%,#2f2a15_46%,#37330f_51%,#29271a_57%,#2c2816_60%,#433012_65%,#3f2e14_71%,#412e14_78%,#4b3414_83%,#40301a_88%,#2c261a_94%,#232319_100%)]">
      <div className="mb-[10px] ml-6 flex items-center gap-10">
        <Tile running>
          <Finder />
        </Tile>
        <Tile running>
          <Messages />
        </Tile>
        <Tile>
          <Photos />
        </Tile>
        <Tile>
          <Calendar />
        </Tile>
        <Tile>
          <Reminders />
        </Tile>
        <Tile>
          <Launchpad />
        </Tile>
        <Tile badge="2">
          <SystemSettings />
        </Tile>
      </div>
      <div className="ml-[58px] h-[142px] w-0.5 bg-[#6e6350]" />
      <div className="mb-[10px] ml-[56px] flex items-center gap-10">
        <Tile running>
          <Preview />
        </Tile>
        <Tile running badge="8">
          <div className={`${box} flex items-center justify-center bg-linear-to-b from-[#8bf686] to-[#58bf48]`}>
            <FaWhatsapp className="h-[114px] w-[114px] text-[#f3f3f3]" />
          </div>
        </Tile>
        <Tile running>
          <div className={`${box} flex items-center justify-center bg-linear-to-b from-white to-[#dee4ef]`}>
            <SiOpenai className="h-[95px] w-[95px] text-[#2b3036]" />
          </div>
        </Tile>
        <Tile running>
          <Chrome />
        </Tile>
        <Tile running>
          <AnyDesk className={box} />
        </Tile>
        <Tile running>
          <Terminal />
        </Tile>
        <Tile running>
          <VSCode />
        </Tile>
        <Tile running>
          <Gimp />
        </Tile>
        <Tile running>
          <AnyDesk className={box} />
          <div className="absolute top-16 left-16 h-20 w-20">
            <Memoji />
          </div>
        </Tile>
        <Tile>
          <Rocket />
        </Tile>
      </div>
      <div className="ml-[58px] h-[142px] w-0.5 bg-[#86704f]" />
      <SessionThumb />
      <ShellThumb />
      <Trash />
    </div>
  );
}

/** Dark grassy desktop picture that shows around the dock. */
function Wallpaper() {
  return (
    <div className="absolute inset-x-0 bottom-0 h-[220px] bg-[linear-gradient(90deg,#1f140a_0%,#0f1308_3%,#0a0e06_8%,#0d1107_22%,#141a08_32%,#38270f_36%,#2c1f0e_44%,#120f06_48%,#2a2a0e_54%,#121208_60%,#352c10_66%,#38280f_80%,#2b220d_90%,#0f0f07_96%,#16170e_100%)]">
      <svg className="h-full w-full opacity-50 mix-blend-overlay" preserveAspectRatio="none">
        <filter id="grass" x="0" y="0" width="100%" height="100%">
          <feTurbulence type="fractalNoise" baseFrequency=".03 .08" numOctaves="4" seed="4" />
          <feColorMatrix values="1.800 0 0 0 -.6  1.800 0 0 0 -.6  1.800 0 0 0 -.6  0 0 0 0 1" />
        </filter>
        <rect width="100%" height="100%" filter="url(#grass)" />
      </svg>
    </div>
  );
}

export default function App() {
  return (
    <div className="relative h-[2160px] w-[3840px] overflow-hidden bg-[#b9b5aa] font-[Inter,'Liberation_Sans',sans-serif]">
      <Wallpaper />
      <div className="relative flex h-full flex-col">
        <MenuBar />
        <BrowserWindow />
        <Dock />
      </div>
    </div>
  );
}
